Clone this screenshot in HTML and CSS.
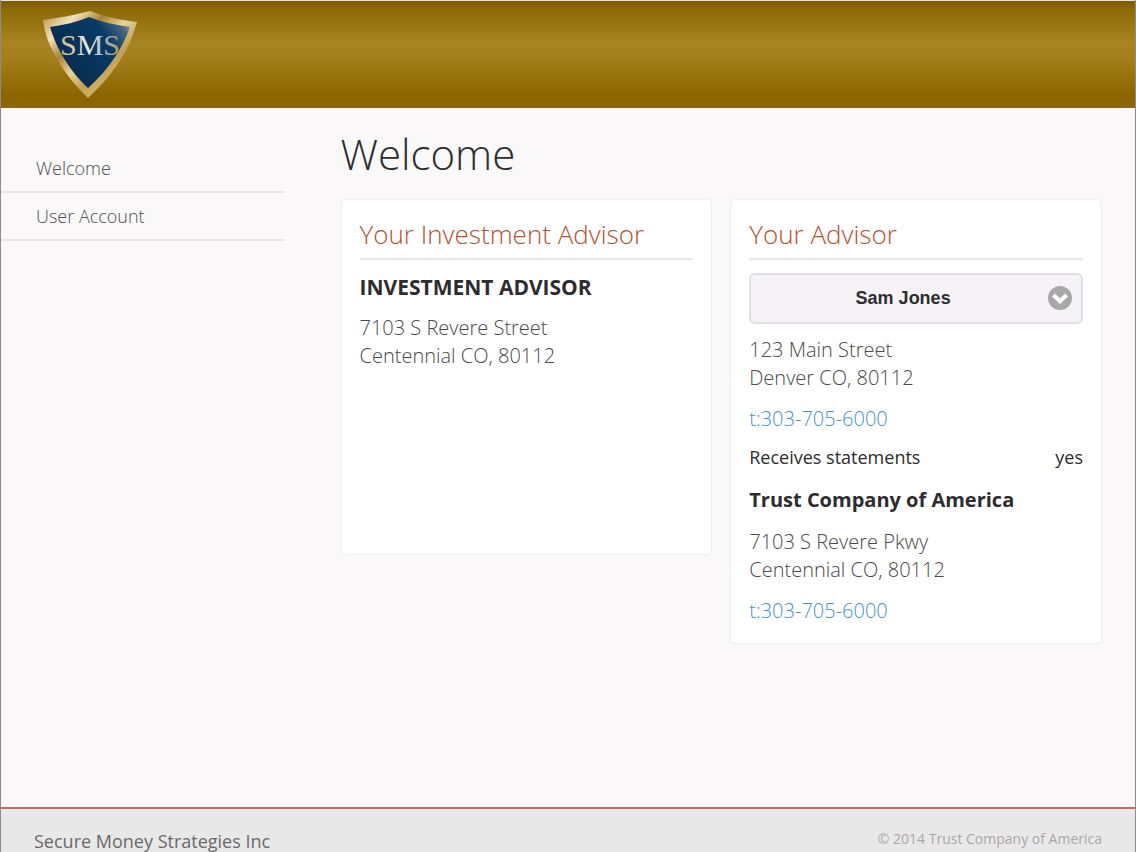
FILE: index.html
```html
<!DOCTYPE html>
<html lang="en">
<head>
    <meta charset="utf-8">
    <title>Secure Money Strategies</title>
    <link rel="stylesheet" href="styles.css">
</head>
<body>
    <header class="header">
        <svg class="logo" width="98" height="92" viewBox="0 0 98 92" role="img" aria-label="SMS">
            <defs>
                <linearGradient id="rim" x1="0" y1="0" x2="1" y2="1">
                    <stop offset="0" stop-color="#b58b3c"/>
                    <stop offset="0.2" stop-color="#f0e2bb"/>
                    <stop offset="0.35" stop-color="#a98434"/>
                    <stop offset="0.5" stop-color="#e6d39c"/>
                    <stop offset="0.65" stop-color="#c3a152"/>
                    <stop offset="1" stop-color="#eedfb0"/>
                </linearGradient>
                <linearGradient id="shield" x1="0" y1="0.6" x2="1" y2="0">
                    <stop offset="0" stop-color="#08294c"/>
                    <stop offset="0.65" stop-color="#073b66"/>
                    <stop offset="0.85" stop-color="#45617f"/>
                    <stop offset="1" stop-color="#a5b2bc"/>
                </linearGradient>
                <linearGradient id="letters" x1="0" y1="0" x2="1" y2="0">
                    <stop offset="0" stop-color="#c7b77d"/>
                    <stop offset="0.5" stop-color="#e9ecea"/>
                    <stop offset="0.75" stop-color="#a3b4b4"/>
                    <stop offset="1" stop-color="#b49a4e"/>
                </linearGradient>
            </defs>
            <path fill="url(#rim)" d="M2 11C18 9 34 6 49 2C64 8 80 11 96 13C92 27 88 37 82 46C73 62 61 76 47 89C34 76 24 64 16 50C9 38 4 26 2 11Z"/>
            <path fill="url(#shield)" d="M9 18C23 16 36 13 48 8C61 13 75 16 89 18C84 32 79 40 74 48C66 60 57 70 47 79C36 69 28 58 21 46C16 37 12 28 9 18Z"/>
            <text x="49" y="46" text-anchor="middle" font-size="30" fill="url(#letters)">SMS</text>
        </svg>
    </header>

    <div class="content">
        <nav class="sidebar">
            <a href="#welcome">Welcome</a>
            <a href="#account">User Account</a>
        </nav>

        <main class="main" id="welcome">
            <h1>Welcome</h1>
            <div class="cards">
                <section class="card">
                    <h2>Your Investment Advisor</h2>
                    <h3 class="company">INVESTMENT ADVISOR</h3>
                    <p>7103 S Revere Street<br>Centennial CO, 80112</p>
                </section>

                <section class="card">
                    <h2><label for="advisor">Your Advisor</label></h2>
                    <div class="select-box">
                        <select id="advisor">
                            <option>Sam Jones</option>
                        </select>
                        <svg class="arrow" width="24" height="24" viewBox="0 0 24 24" aria-hidden="true">
                            <circle cx="12" cy="12" r="12" fill="#a9a8a9"/>
                            <path d="M5.5 9L12 15.2L18.5 9" fill="none" stroke="#fff" stroke-width="4"/>
                        </svg>
                    </div>
                    <p>123 Main Street<br>Denver CO, 80112</p>
                    <p><a href="tel:303-705-6000">t:303-705-6000</a></p>
                    <div class="statements">
                        <span>Receives statements</span>
                        <span>yes</span>
                    </div>
                    <h3>Trust Company of America</h3>
                    <p>7103 S Revere Pkwy<br>Centennial CO, 80112</p>
                    <p><a href="tel:303-705-6000">t:303-705-6000</a></p>
                </section>
            </div>
        </main>
    </div>

    <footer class="footer">
        <span>Secure Money Strategies Inc</span>
        <small>© 2014 Trust Company of America</small>
    </footer>
</body>
</html>
```
FILE: styles.css
```css
* { box-sizing: border-box; }
body {
    display: flex;
    flex-direction: column;
    height: 100vh;
    min-height: 700px;
    margin: 0;
    border-left: 1px solid #8c8b8c;
    border-right: 1px solid #8c8b8c;
    background: #faf8f9;
    color: #2e2c2f;
    font-family: "Open Sans", sans-serif;
    font-weight: 300;
}
a { text-decoration: none; }

/* Header */
.header {
    flex: none;
    height: 108px;
    padding: 8px 40px;
    border-top: 1px solid #e8e3d5;
    border-bottom: 1px solid #866a20;
    background: linear-gradient(#7c5a00, #8b6a07 8%, #a88422 40%, #a37f1b 55%, #8b6600 88%, #8a6500);
}
.logo { display: block; }
.logo text { font-family: "Liberation Serif", serif; }

.content {
    display: flex;
    flex: 1;
}

/* Sidebar */
.sidebar {
    width: 25%;
    padding-top: 37px;
}
.sidebar a {
    display: block;
    height: 48px;
    padding-left: 35px;
    border-bottom: 2px solid #e6e4e6;
    color: #514f52;
    font-size: 18px;
    line-height: 46px;
}

/* Cards */
.main {
    flex: 1;
    padding: 16px 33px 0 56px;
}
h1 {
    margin: 0 0 15px;
    font-size: 42px;
    font-weight: 300;
    line-height: 60px;
}
.cards {
    display: grid;
    grid-template-columns: 1fr 1fr;
    gap: 18px;
    align-items: start;
}
.card {
    min-height: 356px;
    padding: 16px 18px 18px;
    border: 1px solid #f0eef0;
    border-radius: 4px;
    background: #fff;
}
h2 {
    margin: 0 0 13px;
    padding-bottom: 6px;
    border-bottom: 2px solid #e8e6e8;
    color: #b3532b;
    font-size: 26px;
    font-weight: 300;
    line-height: 36px;
}
h3 {
    margin: 0 0 14px;
    font-size: 20px;
    font-weight: 700;
    line-height: 28px;
}
.company {
    margin-bottom: 13px;
    font-size: 21px;
}
.card p {
    margin: 0 0 13px;
    color: #4b494c;
    font-size: 20px;
    line-height: 28px;
}
.card p a { color: #4b92c8; }
.card p:last-child { margin-bottom: 0; }

.select-box {
    position: relative;
    margin-bottom: 12px;
}
select {
    display: block;
    width: 100%;
    height: 51px;
    padding: 0 36px 2px 10px;
    border: 2px solid #e1dfe2;
    border-radius: 6px;
    background: #f5f3f7;
    color: #2e2c2f;
    font: bold 18px "Liberation Sans", sans-serif;
    text-align-last: center;
    appearance: none;
}
.arrow {
    position: absolute;
    top: 13px;
    right: 11px;
    pointer-events: none;
}
.statements {
    display: flex;
    justify-content: space-between;
    margin-bottom: 18px;
    font-size: 18px;
    font-weight: 400;
    line-height: 22px;
}

/* Footer */
.footer {
    display: flex;
    flex: none;
    justify-content: space-between;
    height: 45px;
    padding: 21px 33px 0;
    border-top: 2px solid #bd6f5c;
    background: #e9e8e8;
    color: #6b696b;
    font-size: 18px;
    font-weight: 400;
    line-height: 22px;
}
.footer small {
    color: #a9a7a9;
    font-size: 14px;
    line-height: 18px;
}
```
